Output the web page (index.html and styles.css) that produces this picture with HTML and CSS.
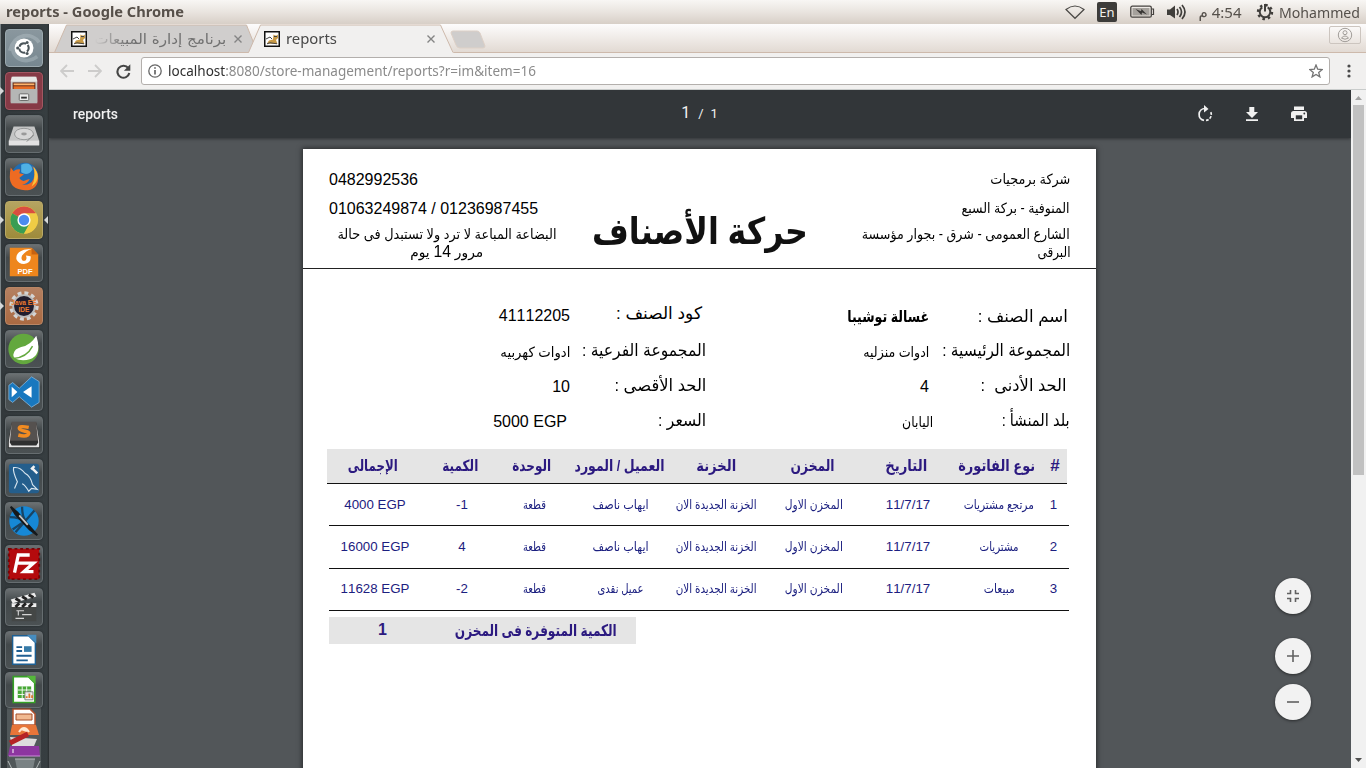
FILE: index.html
```html
<!DOCTYPE html>
<html lang="en">
<head>
<meta charset="utf-8">
<title>reports</title>
<link rel="stylesheet" href="styles.css">
</head>
<body>
<div class="desktop">
  <header class="panel">
    <span class="fit panel-title" data-w="178">reports - Google Chrome</span>
    <div class="tray">
      <svg class="ic-wifi" width="20" height="16" viewBox="0 0 20 16"><path d="M1 5.500Q10 -1.500 19 5.500L10 14.300Z" fill="none" stroke="#4a4845" stroke-width="1.200"/></svg>
      <span class="lang">En</span>
      <svg class="ic-batt" width="25" height="14" viewBox="0 0 25 14"><rect x=".8" y="1.200" width="20.500" height="11" rx="1.500" fill="none" stroke="#45423f" stroke-width="1.300"/><rect x="2.500" y="3" width="17" height="7.500" fill="#a5a19c"/><path d="M22 4h1.500v5.500H22" fill="none" stroke="#45423f" stroke-width="1.200"/><path d="M5.500 4l5.500 2.300L11.500 4l5.500 5.500-5-2-.5 2.500z" fill="#383634"/></svg>
      <svg class="ic-vol" width="21" height="18" viewBox="0 0 21 18"><path d="M1 6.500h3L9 2.500v13L4 12H1z" fill="#403e3b"/><path d="M11 6q2 3 0 6M13.500 4q4 5 0 10M16 2q6 7 0 14" fill="none" stroke="#403e3b" stroke-width="1.700"/></svg>
      <span class="fit clock" data-w="43" dir="rtl">4:54 م</span>
      <svg class="ic-gear" width="18" height="18" viewBox="0 0 18 18"><circle cx="9" cy="9" r="7" fill="none" stroke="#403e3b" stroke-width="2.400" stroke-dasharray="2.500 3"/><path d="M6.300 4.300a5.300 5.300 0 1 0 5.400 0" fill="none" stroke="#403e3b" stroke-width="2"/><path d="M9 1v7.500" stroke="#403e3b" stroke-width="2"/></svg>
      <span class="fit user" data-w="81">Mohammed</span>
    </div>
  </header>

  <div class="work">
    <nav class="launcher">
      <div class="tile dash"><svg viewBox="0 0 38 38"><path d="M4 22C9 3 27 2 35 13M33 28C20 38 3 29 8 14" fill="none" stroke="#c1cbd0" stroke-width="4" opacity=".35"/><circle cx="19" cy="19" r="10" fill="#fff"/><circle cx="19" cy="19" r="5" fill="none" stroke="#4b555a" stroke-width="2.200" stroke-dasharray="8.470 2" stroke-dashoffset="4.200"/><circle cx="12.300" cy="19" r="1.600" fill="#4b555a"/><circle cx="22.300" cy="13.200" r="1.600" fill="#4b555a"/><circle cx="22.300" cy="24.800" r="1.600" fill="#4b555a"/></svg></div>
      <div class="tile files"><i class="run"></i><svg viewBox="0 0 38 38"><path d="M7 4h24l2 4v23H5V8z" fill="#c7c7c5"/><path d="M5 9h28l-1-5H6z" fill="#e8e8e6"/><path d="M7 10h24v7H7z" fill="#62240f"/><path d="M8 11h22v2H8z" fill="#ffb56d"/><path d="M8 14h22v3H8z" fill="#e66d25"/><path d="M5 17h28v15H5z" fill="#b5b6b5"/><rect x="14" y="22" width="10" height="7" rx="1" fill="#eee" stroke="#666"/><path d="M16 26h6" stroke="#333" stroke-width="2"/></svg></div>
      <div class="tile"><svg viewBox="0 0 38 38"><path d="M8 11h22l5 15v5H3v-5z" fill="#c4c5c5"/><path d="M3 26h32v5H3z" fill="#e2e2e2"/><ellipse cx="19" cy="19" rx="10" ry="6" fill="#d6d6d6" stroke="#949696"/><ellipse cx="19" cy="19" rx="3" ry="1.500" fill="#999"/><path d="M22 27l7-7" stroke="#7e8080"/></svg></div>
      <div class="tile"><svg viewBox="0 0 38 38"><circle cx="20" cy="18" r="14" fill="#1f6cb3"/><path d="M16 6q10-4 12 5-5 8-12 3z" fill="#4fb0e4"/><path d="M5 9l3 4q3-3 7-2l-1 4 5 1-5 4q3 5 8 2l3-1q-2 5-8 6 9 1 12-6 3-8-2-14 8 6 7 14-1 12-14 12Q4 32 4 19q0-5 1-10z" fill="#ee6b22"/><path d="M29 8q10 13-2 21 5-9 2-21z" fill="#fbc43a"/></svg></div>
      <div class="tile chrome"><i class="run"></i><i class="focus"></i><svg viewBox="0 0 38 38"><circle cx="19" cy="19" r="14.500" fill="#e8c33b"/><path d="M19 19L6.500 11.800a14.500 14.500 0 0 1 25 0z" fill="#d94e41"/><path d="M19 19L6.500 11.800a14.500 14.500 0 0 0 12.500 21.700l6-11z" fill="#3a9d53"/><path d="M19 12h13a14.500 14.500 0 0 1-13 21.500l7-12z" fill="#efcc45"/><circle cx="19" cy="19" r="7" fill="#fff"/><circle cx="19" cy="19" r="5.500" fill="#4b8bee"/></svg></div>
      <div class="tile"><svg viewBox="0 0 38 38"><path d="M4 3h23l7 7v23H4z" fill="#ee861d"/><path d="M27 3v7h7z" fill="#c76210"/><path d="M28 4l-9 1q-9 3-8 10 2 5 8 5 8-1 7-8l-5-1q2 5-2 6-4-1-2-6 4-5 11-7z" fill="#fff"/><text x="20" y="31" text-anchor="middle" class="pdf-label">PDF</text></svg></div>
      <div class="tile java"><i class="run"></i><svg viewBox="0 0 38 38"><circle cx="19" cy="19" r="13.500" fill="none" stroke="#d4d4d4" stroke-width="4" stroke-dasharray="4 3.070"/><circle cx="19" cy="19" r="11.500" fill="#211d2d" stroke="#bbb" stroke-width="2"/><text x="19" y="18" text-anchor="middle" class="java-label">Java EE</text><text x="19" y="25" text-anchor="middle" class="java-label">IDE</text></svg></div>
      <div class="tile"><svg viewBox="0 0 38 38"><circle cx="18.500" cy="19" r="16" fill="#63a83e"/><path d="M32 5q8 25-14 26-12-1-10-7 1-5 8-7 10-2 16-12z" fill="#fff"/><path d="M8 29q14-1 20-13" stroke="#63a83e" stroke-width="1.500" fill="none"/></svg></div>
      <div class="tile"><svg viewBox="0 0 38 38"><path d="M27 3l8 5v22l-8 5-13-11-7 6-4-3V12l4-3 7 6z" fill="#1878bf" stroke="#8fb9da" stroke-width=".8"/><path d="M6 13.500v11l6-5.500zM27 13v12l-9-6z" fill="#fff"/></svg></div>
      <div class="tile"><svg viewBox="0 0 38 38"><path d="M6 6h26l4 22v5H2v-5z" fill="#2f3030"/><path d="M6 5h26l3 20H3z" fill="#55514f"/><path d="M6 8L3 26v6h32v-6L32 8l2 19-2 3H6l-2-3z" fill="#e4e4e4"/><path d="M24 11q-10-2-10 1 0 2 6 3 6 1 3 4-3 2-10 0" fill="none" stroke="#f28b21" stroke-width="3.600"/></svg></div>
      <div class="tile"><svg viewBox="0 0 38 38"><rect x="3" y="4" width="32" height="31" rx="3" fill="#245e8c"/><path d="M9 30l3-7q-5-11-4-15 7-1 12 6 6 3 8 12l5 5-6-1-3 3q-4-7-7-8" fill="none" stroke="#d7e5ef" stroke-width="1.200"/><path d="M27 8l6 6M26.500 10l3.500-3.500" stroke="#f2f2f2" stroke-width="2.600"/></svg></div>
      <div class="tile"><svg viewBox="0 0 38 38"><circle cx="19" cy="19" r="15.500" fill="#1688d6"/><path d="M4 15q10 0 15 4M17 4q0 9 3 14M30 8L10 31M7 28l10-7" stroke="#184465" stroke-width="2.400" fill="none"/><path d="M5 4l7 6 14 16 7 8-8-6-15-16z" fill="#16191b" stroke="#16191b" stroke-width="2"/><path d="M14 13l9 10" stroke="#c4c4c4" stroke-width="2"/></svg></div>
      <div class="tile"><svg viewBox="0 0 38 38"><rect x="3" y="3" width="32" height="32" fill="#b40a0d"/><rect x="3" y="3" width="32" height="32" fill="none" stroke="#750407" stroke-width="2" stroke-dasharray="3 3"/><path d="M9 28L13 9.500h12M11 18h10M19 18h10L19 27h10" fill="none" stroke="#fff" stroke-width="3.500"/></svg></div>
      <div class="tile"><svg viewBox="0 0 38 38"><path d="M6 16h26v18H6z" fill="#444746"/><path d="M6 15h26v4H6z" fill="#eee"/><path d="M5 11L30 4l2 4L7 15z" fill="#eee"/><path d="M10 10l5 3M17 8l5 3M24 6l5 3M10 19l4-4M17 19l4-4M24 19l4-4" stroke="#222" stroke-width="3"/><path d="M11 23h8M13 23v5M17 27h10M10 31h9" stroke="#d4d4d4" stroke-width="1.200"/></svg></div>
      <div class="tile"><svg viewBox="0 0 38 38"><path d="M7 4h17l7 7v23H7z" fill="#fff" stroke="#1c5f93" stroke-width="1.500"/><path d="M22 3h10v9z" fill="#468dbf"/><path d="M11 16h6M11 20h6M11 25h16M11 30h12" stroke="#1e5e92" stroke-width="2"/><path d="M19 15h8v6h-8z" fill="#377ba8"/></svg></div>
      <div class="tile calc"><svg viewBox="0 0 38 38"><path d="M7 4h17l7 7v22H7z" fill="#fff" stroke="#36a126" stroke-width="1.800"/><path d="M22 3h10v9z" fill="#55b73b"/><path d="M12 15h15v13H12z" fill="#47a836"/><path d="M17 15v13M22 15v13M12 19h15M12 24h15" stroke="#fff"/><path d="M20 21h9v9h-9z" fill="#eee" stroke="#777"/><path d="M22 28v-2M25 28v-5M28 28v-3" stroke="#db792c" stroke-width="2"/></svg></div>
      <svg class="stack" viewBox="0 0 38 61"><path d="M2 0h34v61H2z" fill="#51585a"/><path d="M8 1h17l5 5v11H8z" fill="#fff" stroke="#b6532e" stroke-width="1.500"/><path d="M11 6h16v6H11z" fill="#f1b991" stroke="#a64e2b"/><path d="M7 17h24l3 10H5z" fill="#e77539"/><path d="M14 24q5-8 10 0M16 21l6 2" stroke="#ffe8d2" stroke-width="2" fill="none"/><path d="M5 29l27 2-3 7H7z" fill="#ddd"/><path d="M5 35l18-9" stroke="#b52326" stroke-width="5"/><path d="M5 38h29l1 10H3z" fill="#8d36a0"/><path d="M4 48h31" stroke="#cc8bd9"/><path d="M8 41v4" stroke="#fff"/><path d="M10 51h20l-2 10H12z" fill="#7a8284"/><path d="M10 51h20M3 53l4 8M35 53l-4 8" stroke="#b4baba"/></svg>
    </nav>

    <main class="browser">
      <div class="tabs">
        <div class="tab tab-back">
          <svg class="tab-shape" width="204" height="29"><path d="M.5 28.500L12.500 1h180l11 27.500z" fill="#d0cecd" stroke="#cdb9ab"/></svg>
          <svg class="fav" viewBox="0 0 16 16"><path d="M.75.75h14.500v14.500H.75z" fill="#fff" stroke="#111" stroke-width="1.500"/><path d="M3 12.500l2-3 4-1 .5-5 1.500 1h2l1-1v3.500l-2 2 1.500 4z" fill="#c99a45"/><path d="M2 8l4-2 2 2M3 12.800l3-1 7 1M10 5.500h3" stroke="#444" fill="none"/></svg>
          <span class="tab-ar" dir="rtl"><span class="fit" data-w="132">برنامج إدارة المبيعات</span></span>
          <svg class="close" viewBox="0 0 8 8"><path d="M.5.500l7 7M7.500.500l-7 7" stroke="#848484" stroke-width="1.400"/></svg>
        </div>
        <div class="tab tab-front">
          <svg class="tab-shape" width="206" height="29"><path d="M.5 29L12.500 1h180l13 28z" fill="#f1f0ef"/><path d="M.5 28.500L12.500 1h180l12.500 27.500" fill="none" stroke="#cdb9ab"/></svg>
          <svg class="fav" viewBox="0 0 16 16"><path d="M.75.75h14.500v14.500H.75z" fill="#fff" stroke="#111" stroke-width="1.500"/><path d="M3 12.500l2-3 4-1 .5-5 1.500 1h2l1-1v3.500l-2 2 1.500 4z" fill="#c99a45"/><path d="M2 8l4-2 2 2M3 12.800l3-1 7 1M10 5.500h3" stroke="#444" fill="none"/></svg>
          <span class="fit tab-name" data-w="51">reports</span>
          <svg class="close" viewBox="0 0 8 8"><path d="M.5.500l7 7M7.500.500l-7 7" stroke="#848484" stroke-width="1.400"/></svg>
        </div>
        <svg class="newtab" width="36" height="19"><path d="M3 1h24q2 0 3 2l5 13q0 2-2 2H10q-3 0-4-3L1 3q0-2 2-2z" fill="#cfcdcc" stroke="#ddd0c6"/></svg>
        <div class="avatar"><svg width="16" height="16" viewBox="0 0 16 16" fill="none" stroke="#a19d99"><circle cx="8" cy="8" r="6.700"/><circle cx="8" cy="5.700" r="2"/><path d="M4.500 11q3.500-4 7 0-3.500 2.500-7 0z"/></svg></div>
      </div>

      <div class="addressbar">
        <svg class="nav" width="14" height="14" viewBox="0 0 14 14"><path d="M14 7H1M7 1L1 7l6 6" fill="none" stroke="#cdcccb" stroke-width="1.800"/></svg>
        <svg class="nav" width="14" height="14" viewBox="0 0 14 14"><path d="M0 7h13M7 1l6 6-6 6" fill="none" stroke="#cdcccb" stroke-width="1.800"/></svg>
        <svg class="nav" width="15" height="15" viewBox="0 0 15 15"><path d="M12.300 4.200A6 6 0 1 0 13.300 9" fill="none" stroke="#454545" stroke-width="2.100"/><path d="M14.300.3v6.400H7.900z" fill="#454545"/></svg>
        <div class="urlbox">
          <svg width="14" height="14" viewBox="0 0 14 14"><circle cx="7" cy="7" r="6.200" fill="none" stroke="#666" stroke-width="1.300"/><path d="M7 6v4.500M7 3.200v1.600" stroke="#666" stroke-width="1.700"/></svg>
          <span class="fit url" data-w="368"><b>localhost</b>:8080/store-management/reports?r=im&amp;item=16</span>
          <svg class="star" width="14" height="14" viewBox="0 0 14 14"><path d="M7 1l1.700 4.200 4.500.3-3.500 2.900 1.200 4.500L7 10.400l-3.900 2.500 1.200-4.500L.8 5.500l4.500-.3z" fill="none" stroke="#747474" stroke-width="1.300"/></svg>
        </div>
        <svg class="menu" width="4" height="14" viewBox="0 0 4 14" fill="#4a4a4a"><circle cx="2" cy="2" r="1.600"/><circle cx="2" cy="7" r="1.600"/><circle cx="2" cy="12" r="1.600"/></svg>
      </div>

      <div class="content">
        <section class="viewer">
          <div class="pdfbar">
            <span class="fit doc-name" data-w="45">reports</span>
            <span class="pages"><span class="cur">1</span><span class="slash">/</span><span>1</span></span>
            <div class="tools">
              <svg width="18" height="18" viewBox="0 0 18 18"><path d="M9 3.500A6 6 0 0 0 8 15.400" fill="none" stroke="#f1f1f1" stroke-width="1.700"/><path d="M8 0l4.500 4L8 7.500z" fill="#f1f1f1"/><path d="M10 15.400a6 6 0 0 0 4.800-8.300" fill="none" stroke="#f1f1f1" stroke-width="1.700" stroke-dasharray="2.800 1.300"/></svg>
              <svg width="18" height="18" viewBox="0 0 18 18" fill="#f1f1f1"><path d="M6.300 2h5v5H15l-6 6-6-6h3.300zM3 14.300h12V16H3z"/></svg>
              <svg width="18" height="18" viewBox="0 0 18 18" fill="#f1f1f1"><path d="M4 1.500h10V5H4zM3.500 6h11A2.500 2.500 0 0 1 17 8.500V13h-3v3H4v-3H1V8.500A2.500 2.500 0 0 1 3.500 6z"/><path d="M5.800 10.300h6.400v4H5.800z" fill="#323639"/><circle cx="14.300" cy="8.500" r=".9" fill="#323639"/></svg>
            </div>
          </div>

          <article class="paper" dir="rtl">
            <div class="letterhead">
              <div class="company">
                <p class="l1"><span class="fit" data-w="80">شركة برمجيات</span></p>
                <p class="l2"><span class="fit" data-w="108">المنوفية - بركة السبع</span></p>
                <p class="l3"><span class="fit" data-w="208">الشارع العمومى - شرق - بجوار مؤسسة</span></p>
                <p class="l4"><span class="fit" data-w="33">البرقى</span></p>
              </div>
              <h1><span class="fit" data-w="216">حركة الأصناف</span></h1>
              <div class="contact">
                <p class="l1 num" dir="ltr">0482992536</p>
                <p class="l2 num" dir="ltr">01063249874 / 01236987455</p>
                <p class="l3 mid"><span class="fit" data-w="219">البضاعة المباعة لا ترد ولا تستبدل فى حالة</span></p>
                <p class="l4 mid"><span class="fit" data-w="73">مرور <span class="num">14</span> يوم</span></p>
              </div>
            </div>

            <div class="details">
              <div class="pad2 low"><span class="fit" data-w="90">اسم الصنف :</span></div>
              <div class="val low"><b class="fit" data-w="82">غسالة توشيبا</b></div>
              <div class="pad4 high"><span class="fit" data-w="86">كود الصنف :</span></div>
              <div class="num code">41112205</div>

              <div><span class="fit" data-w="128">المجموعة الرئيسية :</span></div>
              <div class="val"><span class="fit" data-w="66">ادوات منزليه</span></div>
              <div><span class="fit" data-w="124">المجموعة الفرعية :</span></div>
              <div class="val"><span class="fit" data-w="70">ادوات كهربيه</span></div>

              <div class="pad3"><span class="fit" data-w="86">الحد الأدنى &nbsp;:</span></div>
              <div class="num">4</div>
              <div><span class="fit" data-w="92">الحد الأقصى :</span></div>
              <div class="num">10</div>

              <div><span class="fit" data-w="68">بلد المنشأ :</span></div>
              <div class="val origin"><span class="fit" data-w="31">اليابان</span></div>
              <div><span class="fit" data-w="48">السعر :</span></div>
              <div class="num price"><bdi dir="ltr">5000 EGP</bdi></div>
            </div>

            <div class="row thead">
              <span class="hash">#</span>
              <span><span class="fit" data-w="77">نوع الفاتورة</span></span>
              <span><span class="fit" data-w="42">التاريخ</span></span>
              <span><span class="fit" data-w="44">المخزن</span></span>
              <span><span class="fit" data-w="40">الخزنة</span></span>
              <span><span class="fit" data-w="90">العميل / المورد</span></span>
              <span><span class="fit" data-w="39">الوحدة</span></span>
              <span><span class="fit" data-w="36">الكمية</span></span>
              <span><span class="fit" data-w="50">الإجمالى</span></span>
            </div>
            <div class="row first">
              <span class="idx">1</span>
              <span><span class="fit" data-w="70">مرتجع مشتريات</span></span>
              <span>11/7/17</span>
              <span class="store"><span class="fit" data-w="58">المخزن الاول</span></span>
              <span class="store"><span class="fit" data-w="81">الخزنة الجديدة الان</span></span>
              <span><span class="fit" data-w="56">ايهاب ناصف</span></span>
              <span><span class="fit" data-w="23">قطعة</span></span>
              <span dir="ltr">-1</span>
              <span dir="ltr">4000 EGP</span>
            </div>
            <div class="row">
              <span class="idx">2</span>
              <span><span class="fit" data-w="39">مشتريات</span></span>
              <span>11/7/17</span>
              <span class="store"><span class="fit" data-w="58">المخزن الاول</span></span>
              <span class="store"><span class="fit" data-w="81">الخزنة الجديدة الان</span></span>
              <span><span class="fit" data-w="56">ايهاب ناصف</span></span>
              <span><span class="fit" data-w="23">قطعة</span></span>
              <span dir="ltr">4</span>
              <span dir="ltr">16000 EGP</span>
            </div>
            <div class="row">
              <span class="idx">3</span>
              <span><span class="fit" data-w="31">مبيعات</span></span>
              <span>11/7/17</span>
              <span class="store"><span class="fit" data-w="58">المخزن الاول</span></span>
              <span class="store"><span class="fit" data-w="81">الخزنة الجديدة الان</span></span>
              <span><span class="fit" data-w="46">عميل نقدى</span></span>
              <span><span class="fit" data-w="23">قطعة</span></span>
              <span dir="ltr">-2</span>
              <span dir="ltr">11628 EGP</span>
            </div>
            <div class="stock">
              <span class="fit" data-w="162">الكمية المتوفرة فى المخزن</span>
              <b class="stock-n">1</b>
            </div>
          </article>

          <div class="zoom">
            <button class="fitbtn" aria-label="Fit"><svg width="14" height="14" viewBox="0 0 14 14" fill="none" stroke="#616161" stroke-width="1.600"><path d="M1 4.500h3.500V1M9.500 1v3.500H13M1 9.500h3.500V13M9.500 13V9.500H13"/></svg></button>
            <button aria-label="Zoom in"><svg width="14" height="14" viewBox="0 0 14 14" stroke="#616161" stroke-width="1.600"><path d="M1 7h12M7 1v12"/></svg></button>
            <button aria-label="Zoom out"><svg width="14" height="14" viewBox="0 0 14 14" stroke="#616161" stroke-width="1.600"><path d="M1 7h12"/></svg></button>
          </div>
        </section>
        <div class="scroll">
          <svg width="15" height="15"><path d="M4 10l3.500-4L11 10z" fill="#a3a3a3"/></svg>
          <div class="thumb"></div>
          <svg width="15" height="15"><path d="M4 5l3.500 4L11 5z" fill="#505050"/></svg>
        </div>
      </div>
    </main>
  </div>
</div>
<script src="fit.js"></script>
</body>
</html>
```
FILE: styles.css
```css
* { box-sizing: border-box; }
body { margin: 0; overflow: hidden; font-family: "Noto Sans", "DejaVu Sans", sans-serif; }
p, h1 { margin: 0; font-weight: normal; }
.desktop { width: 1366px; height: 768px; display: flex; flex-direction: column; }
.fit { display: inline-block; white-space: nowrap; flex: none; }

.panel { height: 24px; flex: none; display: flex; align-items: center; justify-content: space-between; padding: 0 6px 1px 6px; background: linear-gradient(#f8f6f4, #e9e4df 50%, #d7cfc7); color: #4c4842; }
.panel-title { font-size: 14px; font-weight: bold; color: #57504a; }
.tray { display: flex; align-items: center; font-size: 14.5px; color: #55504b; }
.lang { width: 20px; height: 20px; margin: 0 13px 0 12px; border-radius: 2px; background: #3d3c3a; color: #f4f1ec; font-size: 13px; line-height: 20px; text-align: center; }
.ic-vol { margin: 0 12px 0 11px; }
.ic-gear { margin: 0 5px 0 14px; }

.work { flex: 1; min-height: 0; display: flex; }
.launcher { width: 49px; flex: none; display: flex; flex-direction: column; gap: 5px; padding: 5px 6px 0 5px; overflow: hidden; background: linear-gradient(90deg, #7b8487 0, #7b8487 1px, #33393c 1px, #373e41 47px, #292d2f 49px); }
.tile { position: relative; width: 38px; height: 38px; flex: none; border: 1px solid #666d70; border-radius: 4px; background: linear-gradient(#6b7072, #43494b 35%, #4b5153); box-shadow: 0 0 2px #1e2325; }
.tile > svg { display: block; width: 36px; height: 36px; }
.dash { background: linear-gradient(#8a979e, #778790); border-color: #9ba8ae; }
.files { background: #863a46; border-color: #a35762; }
.chrome { background: linear-gradient(#b5a461, #9e8b3b); border-color: #b9a966; }
.java { background: linear-gradient(#b48061, #aa6a42); border-color: #b98665; }
.calc { height: 36px; margin-top: -2px; }
.calc > svg { height: 34px; }
.stack { width: 38px; height: 61px; flex: none; margin-top: -5px; }
.run, .focus { position: absolute; top: 14px; border: 4px solid transparent; }
.run { left: -6px; border-left-color: #d5d8d9; border-right: 0; }
.focus { right: -6px; border-right-color: #d5d8d9; border-left: 0; }
.pdf-label { font: bold 8px "Liberation Sans", sans-serif; fill: #fff; }
.java-label { font: bold 7px "Liberation Sans", sans-serif; fill: #ec7a30; }

.browser { flex: 1; min-width: 0; display: flex; flex-direction: column; }
.tabs { height: 29px; flex: none; display: flex; align-items: flex-start; padding-left: 5px; border-bottom: 1px solid #cdb9ab; background: linear-gradient(#fdfcfc, #e2dad3); }
.tab { position: relative; height: 29px; display: flex; align-items: center; }
.tab > * { position: relative; }
.tab > .tab-shape { position: absolute; left: 0; top: 0; }
.tab-back { width: 194px; padding-left: 17px; }
.tab-front { width: 202px; padding-left: 16px; z-index: 1; }
.fav { width: 16px; height: 16px; flex: none; margin-bottom: -1px; }
.tab-ar { width: 131px; height: 24px; line-height: 24px; margin: 0 8px 0 8px; overflow: hidden; font-family: "DejaVu Sans", sans-serif; font-size: 14px; color: #707070; -webkit-mask-image: linear-gradient(90deg, transparent, #000 32px); mask-image: linear-gradient(90deg, transparent, #000 32px); }
.tab-name { margin: 0 0 2px 6px; font-size: 14.5px; color: #484848; }
.close { width: 8px; height: 8px; }
.tab-front .close { margin-left: 90px; }
.newtab { margin: 6px 0 0 0; }
.avatar { margin: 2px 5px 0 auto; width: 32px; height: 18px; border: 1px solid #ccc5bf; border-radius: 2px; display: flex; align-items: center; justify-content: center; }
.addressbar { height: 37px; flex: none; display: flex; align-items: center; padding: 0 15px 0 11px; background: #f1f0ef; border-bottom: 1px solid #c9cccb; }
.nav { margin-right: 14px; flex: none; }
.nav + .nav + .nav { margin-right: 10px; }
.urlbox { flex: 1; height: 28px; display: flex; align-items: center; padding: 0 6px; border: 1px solid #b3afac; border-radius: 3px; background: #fff; }
.url { margin: 0 0 2px 6px; font-size: 14px; color: #8b8b8b; }
.url b { font-weight: normal; color: #2f2f2f; }
.star { margin-left: auto; }
.menu { margin-left: 17px; }

.content { flex: 1; min-height: 0; display: flex; }
.viewer { position: relative; flex: 1; min-width: 0; overflow: hidden; background: #525659; }
.pdfbar { position: relative; z-index: 1; height: 48px; display: grid; grid-template-columns: 1fr auto 1fr; align-items: center; padding: 0 43px 0 24px; background: #323639; color: #f1f1f1; font: 14px Roboto, sans-serif; box-shadow: 0 1px 3px rgba(0,0,0,.4); }
.doc-name { font-weight: 500; justify-self: start; }
.pages { display: flex; align-items: baseline; font-size: 13px; margin: 0 -18px 3px 0; }
.cur { font-size: 16px; }
.slash { margin: 0 7px 0 8px; }
.tools { display: flex; justify-self: end; gap: 29px; }

.paper { width: 793px; height: 700px; margin: 11px 0 0 254px; background: #fff; color: #000; box-shadow: 0 0 5px 1px rgba(0,0,0,.5); font-family: "Liberation Sans", "DejaVu Sans", sans-serif; font-kerning: none; }
.num { font-size: 16px; }
.letterhead { height: 120px; display: grid; grid-template-columns: 237px 266px 1fr; padding: 0 26px; border-bottom: 1.5px solid #222; }
.letterhead p { white-space: nowrap; font-size: 14px; height: 20px; line-height: 20px; }
.letterhead p.l1 { margin-top: 20px; }
.letterhead p.l2 { margin-top: 9px; }
.letterhead p.l3 { margin-top: 6px; }
.letterhead p.l4 { margin-top: -2px; }
.letterhead p.num { font-size: 16px; padding-top: 1px; }
.letterhead h1 { font-size: 37px; font-weight: bold; line-height: 50px; text-align: center; margin-top: 58px; color: #111; }
.contact { width: 238px; }
.contact .mid { text-align: center; }
.contact .mid .fit { margin-right: 2px; }
.details { display: grid; grid-template-columns: 141px 223px 136px 1fr; grid-auto-rows: 35px; align-items: center; padding: 29px 26px 0; height: 180px; font-size: 17px; line-height: 30px; }
.details .val { font-size: 14px; padding-top: 3px; }
.details .num { padding-top: 3px; }
.details .code { padding-top: 0; }
.details .low { padding-top: 3px; }
.details b { font-size: 16px; }
.details .pad2 { padding-right: 2px; }
.details .pad3 { padding-right: 3px; }
.details .pad4 { padding-right: 4px; }
.details .high { padding-bottom: 3px; }
.details .origin { margin-right: -4px; }
.details .price { padding-right: 3px; }

.row { width: 740px; height: 42.5px; margin-right: 27px; display: grid; grid-template-columns: 24px 92px 90px 96px 98px 96px 78px 66px 108px; align-items: center; text-align: center; border-bottom: 1.5px solid #111; color: #1c2080; font-size: 13.3px; line-height: 20px; white-space: nowrap; }
.row .fit { font-size: 12.5px; }
.row .idx { margin-right: 7px; }
.row .store { margin-right: 3px; }
.row > span { min-width: 0; }
.row.thead { height: 35px; margin-right: 29px; padding-bottom: 1px; background: #e5e5e5; font-weight: bold; font-size: 17px; color: #2c1a80; }
.row.thead .fit { font-size: 15.5px; }
.row.first { height: 42px; }
.stock { width: 307px; height: 27px; margin: 6px 460px 0 0; padding: 0 19px 1px 0; display: flex; align-items: center; background: #e5e5e5; color: #2c1a80; font-weight: bold; font-size: 16px; }
.stock-n { margin-right: 68px; font-size: 16px; }

.zoom { position: absolute; right: 40px; top: 488px; display: flex; flex-direction: column; gap: 10px; }
.zoom button { width: 36px; height: 36px; padding: 0; border: 0; border-radius: 50%; background: #f2f2f2; box-shadow: 0 1px 3px rgba(0,0,0,.5); display: flex; align-items: center; justify-content: center; }
.zoom .fitbtn { margin-bottom: 14px; }
.scroll { width: 15px; background: #f1f1f1; display: flex; flex-direction: column; }
.scroll svg { flex: none; }
.scroll svg:last-child { margin-top: auto; }
.thumb { width: 11px; height: 370px; margin: 0 2px; background: #c1c1c1; }
```
FILE: fit.js
```js
// Condenses or stretches each label to the width given in data-w.
document.querySelectorAll('.fit').forEach(function (el) {
  var natural = el.getBoundingClientRect().width;
  var wanted = parseFloat(el.dataset.w);
  var rtl = getComputedStyle(el).direction === 'rtl';
  el.style.transformOrigin = rtl ? 'right center' : 'left center';
  el.style.transform = 'scaleX(' + wanted / natural + ')';
  var gap = parseFloat(getComputedStyle(el).marginInlineEnd) || 0;
  el.style.marginInlineEnd = gap + wanted - natural + 'px';
});
```
